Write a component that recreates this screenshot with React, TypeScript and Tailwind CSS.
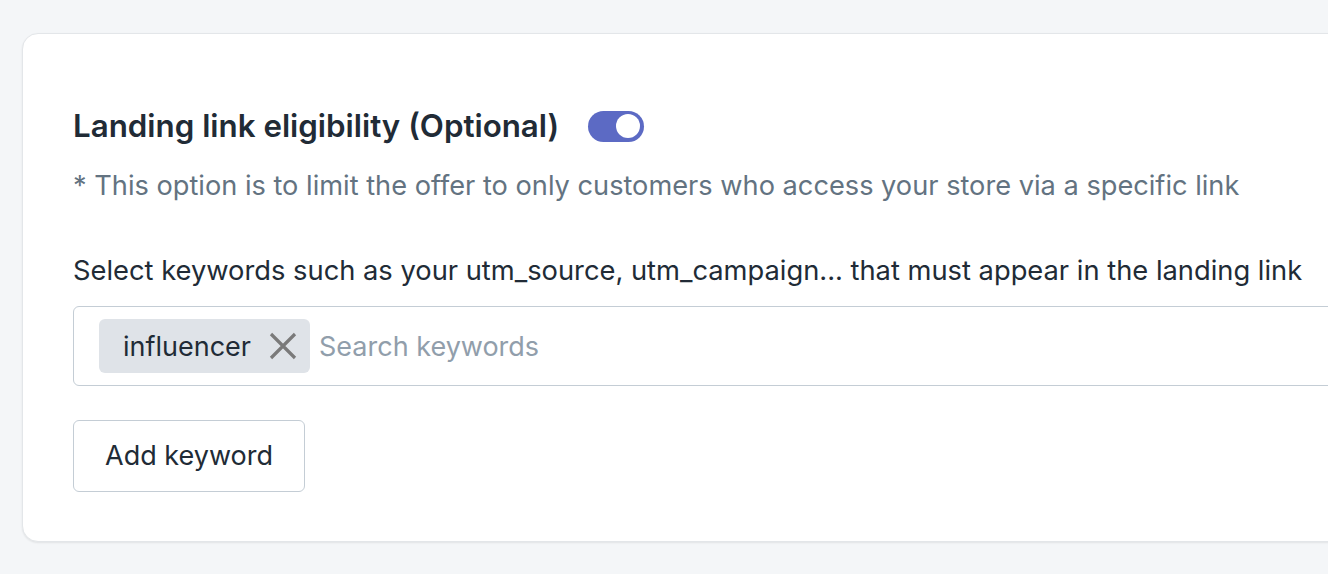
import React, { useState } from "react";

export default function App() {
  const [enabled, setEnabled] = useState(true);
  const [keywords, setKeywords] = useState<string[]>(["influencer"]);

  return (
    <div className="w-[1328px] h-[574px] overflow-hidden bg-[#f4f6f8] pt-[33px] pl-[22px]" style={{ fontFamily: "Inter, 'Noto Sans', sans-serif" }}>
      <div className="w-[1400px] bg-white border border-[#e3e6e9] rounded-[16px] shadow-[0_1px_2px_rgba(0,0,0,0.08)] pt-[72px] pb-[49px] pl-[50px]">
        <div className="flex items-center h-[40px]">
          <h2 className="text-[31.3px] leading-[40px] font-semibold text-[#212b36]">Landing link eligibility (Optional)</h2>
          <button
            type="button"
            onClick={() => setEnabled(!enabled)}
            className={`ml-[29px] w-[56px] h-[31px] rounded-full flex items-center px-[4px] ${enabled ? "bg-[#5c6ac4] justify-end" : "bg-[#c4cdd5] justify-start"}`}
          >
            <span className="w-[24px] h-[24px] rounded-full bg-white block" />
          </button>
        </div>

        <p className="mt-[22px] text-[27.2px] leading-[36px] text-[#637381]">
          * This option is to limit the offer to only customers who access your store via a specific link
        </p>

        <p className="mt-[49px] text-[27.3px] leading-[36px] text-[#212b36]">
          Select keywords such as your utm_source, utm_campaign... that must appear in the landing link
        </p>

        <div className="mt-[17px] h-[80px] border border-[#c4cdd5] rounded-[6px] flex items-center pl-[25px]">
          {keywords.map((k) => (
            <span key={k} className="h-[54px] bg-[#dfe3e8] rounded-[6px] flex items-center pl-[24px] pr-[12px] pt-[3px] text-[27px] text-[#212b36]">
              {k}
              <button type="button" onClick={() => setKeywords(keywords.filter((x) => x !== k))} className="ml-[17px] -mt-[3px] text-[#7a7a7a]">
                <svg width="30" height="30" viewBox="0 0 30 30" fill="none" stroke="currentColor" strokeWidth="3.2" strokeLinecap="butt">
                  <path d="M3 3 L27 27 M27 3 L3 27" />
                </svg>
              </button>
            </span>
          ))}
          <input
            className="ml-[9px] pt-[3px] flex-1 outline-none text-[27px] text-[#212b36] placeholder:text-[#919eab] bg-transparent"
            placeholder="Search keywords"
          />
        </div>

        <button type="button" className="mt-[34px] w-[232px] h-[72px] border border-[#c4cdd5] rounded-[6px] text-[27px] text-[#212b36] bg-white">
          Add keyword
        </button>
      </div>
    </div>
  );
}
